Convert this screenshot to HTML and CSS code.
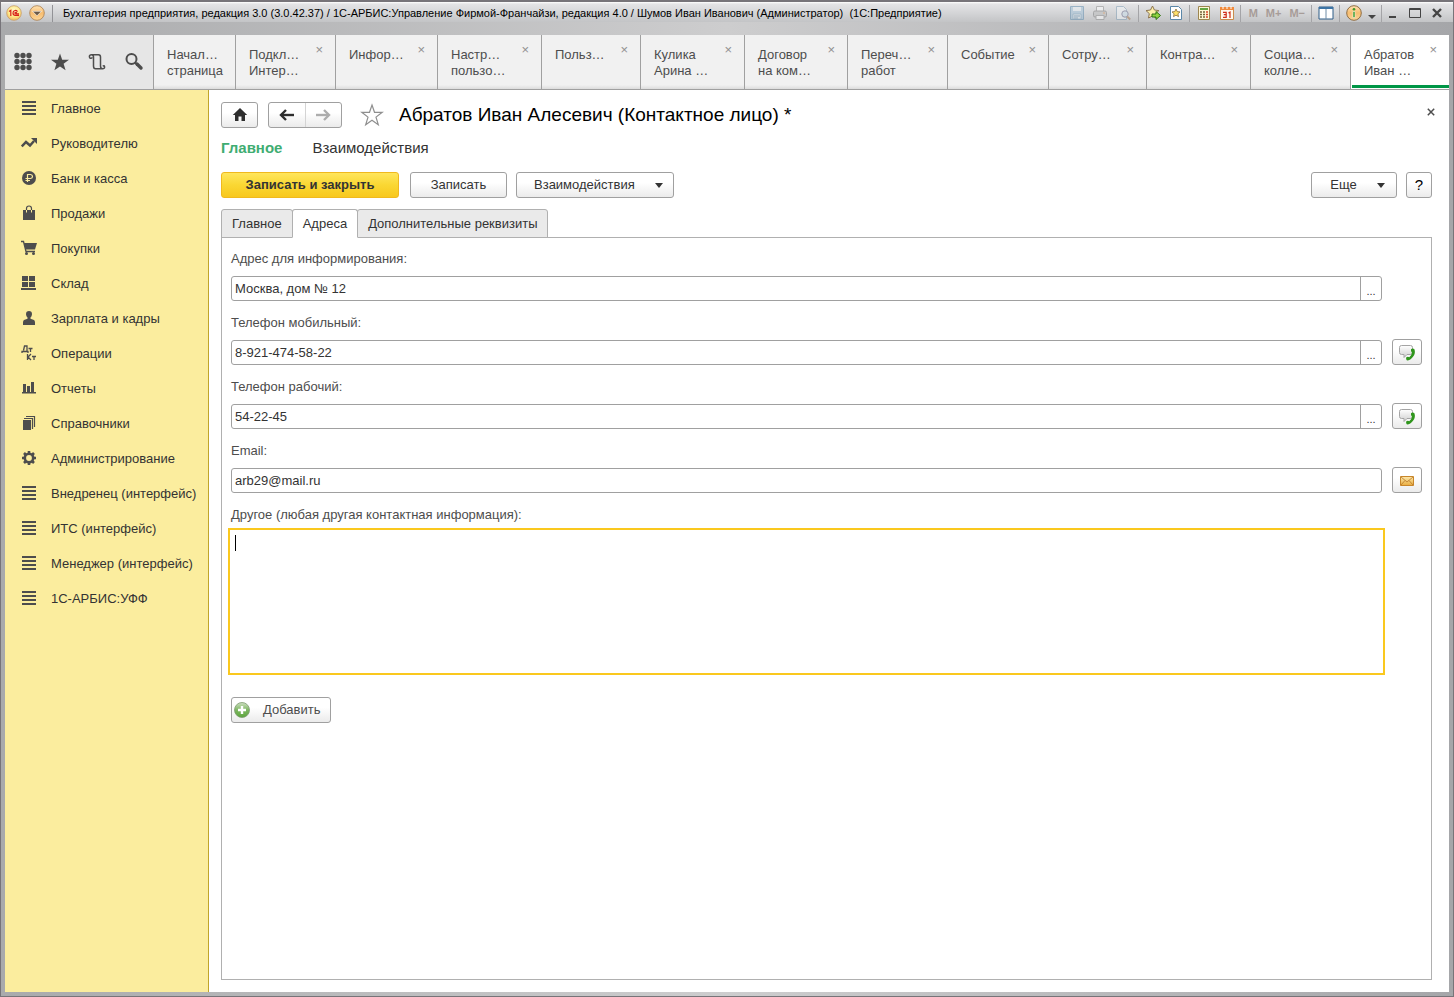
FILE: index.html
```html
<!DOCTYPE html>
<html lang="ru">
<head>
<meta charset="utf-8">
<title>Абратов Иван Алесевич (Контактное лицо)</title>
<link rel="stylesheet" href="styles.css">
</head>
<body>
<svg class="defs" aria-hidden="true">
  <defs>
    <radialGradient id="g-red" cx="50%" cy="35%" r="65%"><stop offset="0" stop-color="#fffbd0"/><stop offset=".6" stop-color="#ffe98a"/><stop offset="1" stop-color="#f2b95e"/></radialGradient>
    <linearGradient id="g-orange" x1="0" y1="0" x2="0" y2="1"><stop offset="0" stop-color="#ffe3b4"/><stop offset=".5" stop-color="#f8bd70"/><stop offset="1" stop-color="#fbd79a"/></linearGradient>
    <linearGradient id="g-green" x1="0" y1="0" x2="0" y2="1"><stop offset="0" stop-color="#cfe0c4"/><stop offset=".5" stop-color="#7db661"/><stop offset="1" stop-color="#5ca63c"/></linearGradient>
    <linearGradient id="g-mail" x1="0" y1="0" x2="0" y2="1"><stop offset="0" stop-color="#fde9ad"/><stop offset="1" stop-color="#e9ac3e"/></linearGradient>
    <linearGradient id="g-bubble" x1="0" y1="0" x2="0" y2="1"><stop offset="0" stop-color="#ffffff"/><stop offset="1" stop-color="#cfcfcf"/></linearGradient>
    <symbol id="lines" viewBox="0 0 16 16"><path fill="#4d4d4d" d="M1 1h14v2H1zM1 5h14v2H1zM1 9h14v2H1zM1 13h14v2H1z"/></symbol>
    <symbol id="phone" viewBox="0 0 18 18"><path d="M3.500 2.500h9q2 0 2 2v5q0 2-2 2H9L6 14.500v-3H3.500q-2 0-2-2v-5q0-2 2-2z" fill="url(#g-bubble)" stroke="#a4a4a4"/><path d="M13 6.300Q14.500 4.800 16.300 6 18 10 15 13.800 12.500 17.300 9 17.500 7.500 16.300 8.300 14.300 9.800 13.200 11.300 14.300 13.600 12.800 14 9.800 12.500 9 13 6.300z" fill="#2f951c"/></symbol>
  </defs>
</svg>
<div class="window">
  <header class="titlebar">
    <svg class="orb" viewBox="0 0 16 16"><circle cx="8" cy="8" r="7.300" fill="url(#g-red)" stroke="#c89d6a" stroke-width=".8"/><path d="M3 6.500 4.800 5.300V11M11.500 6.600Q10.500 5.300 9 5.500 6.900 6 7 8.100 7.200 10.300 9.200 10.300H13M10.800 8.200Q9.800 6.700 8.800 8 9 9 10 8.900H13" fill="none" stroke="#d8201a" stroke-width="1.200"/></svg>
    <svg class="orb" viewBox="0 0 16 16"><circle cx="8" cy="8" r="7.300" fill="url(#g-orange)" stroke="#a97c4c" stroke-width=".8"/><path d="M3.500 6.300h9L8 10.800z" fill="#6b5a48" stroke="#fff" stroke-width=".6"/></svg>
    <span class="sep"></span>
    <span class="caption">Бухгалтерия предприятия, редакция 3.0 (3.0.42.37) / 1С-АРБИС:Управление Фирмой-Франчайзи, редакция 4.0 / Шумов Иван Иванович (Администратор)&nbsp; (1С:Предприятие)</span>
    <div class="systools">
      <div class="group">
        <svg class="faded" viewBox="0 0 16 16"><path d="M1.500 1.500h13v13h-13z" fill="#9fc0d8" stroke="#5888ab"/><path d="M4 2h8v4H4z" fill="#e7eff5"/><path d="M4 9h8v5H4z" fill="#dce8f0" stroke="#5888ab" stroke-width=".6"/><path d="M5 11h6M5 13h4" stroke="#5888ab"/></svg>
        <svg class="faded" viewBox="0 0 16 16"><path d="M4.500 6V1.500h7V6" fill="#fff" stroke="#8c8c8c"/><rect x="1.500" y="6" width="13" height="6" rx="1.500" fill="#bbb" stroke="#777"/><path d="M4 10.500h8v4H4z" fill="#fff" stroke="#8c8c8c"/><path d="M11 8h2" stroke="#e1893a"/></svg>
        <svg class="faded" viewBox="0 0 16 16"><path d="M1.500 1.500h7l3 3v10h-10z" fill="#f3f6f8" stroke="#7c9cb4"/><circle cx="10" cy="9" r="3.200" fill="#cde0ec" stroke="#668"/><path d="m12.200 11.500 3 3" stroke="#a5764c" stroke-width="1.800"/></svg>
      </div>
      <div class="group">
        <svg viewBox="0 0 16 16"><path d="m7.500 1 1.900 4 4.500.6-3.200 3 .8 4.400-4-2-4 2 .8-4.400-3.300-3 4.500-.6z" fill="#fdf0a8" stroke="#8d7550"/><path d="M7 9h4V6.500L15.500 10.500 11 14.500V12H7z" fill="#8fd33f" stroke="#2f7514"/></svg>
        <svg viewBox="0 0 16 16"><path d="M2.500 1.500h8l3 3v10h-11z" fill="#fff" stroke="#5b87a8"/><path d="m8 4 1.200 2.600 2.800.3-2.100 1.900.6 2.800L8 10.200l-2.500 1.400.6-2.800L4 6.900l2.800-.3z" fill="#ffe26b" stroke="#8a6d3b" stroke-width=".8"/></svg>
      </div>
      <div class="group">
        <svg viewBox="0 0 16 16"><path d="M2.500 1.500h11v13h-11z" fill="#fff7d8" stroke="#9d8650"/><path d="M4 3h8v2H4z" fill="#64a844"/><path d="M4 7h2M7 7h2M4 9.500h2M7 9.500h2M4 12h2M7 12h2" stroke="#75633c" stroke-width="1.400"/><path d="M10 7h2M10 9.500h2M10 12h2" stroke="#d8462c" stroke-width="1.400"/></svg>
        <svg viewBox="0 0 16 16"><path d="M1.500 2.500h13v12h-13z" fill="#fff9ee" stroke="#c98c4d"/><path d="M1 2h14v3H1z" fill="#f08a3c"/><path d="M4 1v3M8 1v3M12 1v3" stroke="#fff"/><path d="M4 7.300h3.200v5H4M4.800 9.700h2M9.500 8 11 7v6" fill="none" stroke="#cf2f1c" stroke-width="1.200"/></svg>
      </div>
      <div class="group memory"><span>M</span><span>M+</span><span>M−</span></div>
      <div class="group"><svg viewBox="0 0 16 16"><path d="M1 2h14v12H1z" fill="#fff" stroke="#2c5c88"/><path d="M1 2h14v2H1z" fill="#3d74a5"/><path d="M8 4v10" stroke="#6f8ca6"/></svg></div>
      <div class="group info"><svg viewBox="0 0 16 16"><circle cx="8" cy="8" r="7.300" fill="url(#g-orange)" stroke="#8f6d43"/><path d="M7 6.500h2v6H7z" fill="#3f9a2a" stroke="#fff" stroke-width=".5"/><circle cx="8" cy="4.300" r="1.300" fill="#3f9a2a"/></svg><svg class="drop" viewBox="0 0 8 16"><path d="M0 10h8l-4 4z" fill="#444"/></svg></div>
      <div class="group winbtns">
        <svg viewBox="0 0 12 12"><path d="M2 9h7v2H2z" fill="#444"/></svg>
        <svg viewBox="0 0 12 12"><path d="M.5 1.500h11v9H.5zM.5 2.500h11" fill="none" stroke="#444"/></svg>
        <svg viewBox="0 0 12 12"><path d="m2 2 8 8m0-8-8 8" stroke="#444" stroke-width="2.400"/></svg>
      </div>
    </div>
  </header>

  <nav class="tabbar">
    <div class="tools">
      <svg viewBox="0 0 20 20"><g fill="#4d4d4d"><circle cx="4" cy="3.500" r="2.700"/><circle cx="10" cy="3.500" r="2.700"/><circle cx="16" cy="3.500" r="2.700"/><circle cx="4" cy="9.500" r="2.700"/><circle cx="10" cy="9.500" r="2.700"/><circle cx="16" cy="9.500" r="2.700"/><circle cx="4" cy="15.500" r="2.700"/><circle cx="10" cy="15.500" r="2.700"/><circle cx="16" cy="15.500" r="2.700"/></g></svg>
      <svg viewBox="0 0 20 20"><path d="m10 1.500 2.200 6.300H19l-5.400 4 2 6.500L10 14.400l-5.600 3.900 2-6.500L1 7.800h6.800z" fill="#4d4d4d"/></svg>
      <svg viewBox="0 0 20 20"><path d="M4.500 2.700H11.500Q13.500 2.700 13.500 5V14Q13.500 16.800 15.600 16.800T17.600 14.800Q17.300 13 15.800 14.300M4.500 2.700Q2.400 2.700 2.400 4.600T4.200 6.300Q5 6.200 4.900 5.200M4.500 2.700Q6.500 2.700 6.500 5V14Q6.500 16.800 8.500 16.800H15.500" fill="none" stroke="#4d4d4d" stroke-width="1.500"/></svg>
      <svg viewBox="0 0 20 20"><circle cx="7.500" cy="7" r="5" fill="none" stroke="#4d4d4d" stroke-width="2"/><path d="m11 10.500 2 2" stroke="#4d4d4d" stroke-width="2"/><path d="m13 12 4 4" stroke="#4d4d4d" stroke-width="3.400" stroke-linecap="round"/></svg>
    </div>
    <div class="tabs">
      <a class="tab" href="#">Начал…<br>страница</a>
      <a class="tab" href="#">Подкл…<br>Интер…<i class="x">×</i></a>
      <a class="tab" href="#">Инфор…<i class="x">×</i></a>
      <a class="tab" href="#">Настр…<br>пользо…<i class="x">×</i></a>
      <a class="tab" href="#">Польз…<i class="x">×</i></a>
      <a class="tab" href="#">Кулика<br>Арина …<i class="x">×</i></a>
      <a class="tab" href="#">Договор<br>на ком…<i class="x">×</i></a>
      <a class="tab" href="#">Переч…<br>работ<i class="x">×</i></a>
      <a class="tab" href="#">Событие<i class="x">×</i></a>
      <a class="tab" href="#">Сотру…<i class="x">×</i></a>
      <a class="tab" href="#">Контра…<i class="x">×</i></a>
      <a class="tab" href="#">Социа…<br>колле…<i class="x">×</i></a>
      <a class="tab current" href="#">Абратов<br>Иван …<i class="x">×</i></a>
    </div>
  </nav>

  <div class="body">
    <nav class="sidebar">
      <a href="#"><svg><use href="#lines"/></svg>Главное</a>
      <a href="#"><svg viewBox="0 0 16 16"><path d="M.8 11.500 5 7l4 3.500L13 6" fill="none" stroke="#4d4d4d" stroke-width="2.500"/><path d="M10 3h6v6z" fill="#4d4d4d"/></svg>Руководителю</a>
      <a href="#"><svg viewBox="0 0 16 16"><circle cx="8" cy="8" r="7" fill="#4d4d4d"/><path d="M6.500 12V4.500H9.500Q11.500 4.700 11.500 6.500T9.500 8.500H4.500M4.500 10.500H9" fill="none" stroke="#fbed9e" stroke-width="1.200"/></svg>Банк и касса</a>
      <a href="#"><svg viewBox="0 0 16 16"><path d="M2 5h12v10H2z" fill="#4d4d4d"/><path d="M5.500 7V3.500Q5.500 1 8 1t2.500 2.500V7" fill="none" stroke="#4d4d4d" stroke-width="1.200"/><path d="M5.500 5v2.500M10.500 5v2.500" stroke="#fbed9e"/></svg>Продажи</a>
      <a href="#"><svg viewBox="0 0 16 16"><path d="M0 1.500h2.500L5 11.500h9" fill="none" stroke="#4d4d4d" stroke-width="1.300"/><path d="M3 3h13l-2 6.500H4.500z" fill="#4d4d4d"/><circle cx="5.500" cy="13.500" r="1.500" fill="#4d4d4d"/><circle cx="12.500" cy="13.500" r="1.500" fill="#4d4d4d"/></svg>Покупки</a>
      <a href="#"><svg viewBox="0 0 16 16"><path d="M1 1h6v5H1zM8 1h6v5H8zM1 7h6v5H1zM8 7h6v5H8zM0 13h15v2H0z" fill="#4d4d4d"/></svg>Склад</a>
      <a href="#"><svg viewBox="0 0 16 16"><path d="M8 1q3 0 3 3.200Q10.800 6.500 9.500 7.500v1.300L13 10q1 .5 1 2.500V15H2v-2.500Q2 10.500 3 10l3.500-1.200V7.500Q5.200 6.500 5 4.200 5 1 8 1z" fill="#4d4d4d"/></svg>Зарплата и кадры</a>
      <a href="#"><svg viewBox="0 0 16 16"><path d="M2.500 5.500 3.500 1H6v5M1 8V6.500h6V8M7.500 3.500h4M9.500 3.500V7M6.500 9v6M10 9 7 12l3 3M11 11.500h4M13 11.500V15" fill="none" stroke="#4d4d4d" stroke-width="1.300"/></svg>Операции</a>
      <a href="#"><svg viewBox="0 0 16 16"><path d="M2 4h3v9H2zM6 6h3v7H6zM10 2h3v11h-3zM1 12h14v1.500H1z" fill="#4d4d4d"/></svg>Отчеты</a>
      <a href="#"><svg viewBox="0 0 16 16"><path d="M2 5h8v10H2z" fill="#4d4d4d"/><path d="M3 3.500h8.500V14M5 1.500h8.500V12" fill="none" stroke="#4d4d4d" stroke-width="1.200"/></svg>Справочники</a>
      <a href="#"><svg viewBox="0 0 16 16"><circle cx="8" cy="8" r="4.200" fill="none" stroke="#4d4d4d" stroke-width="2.600"/><path d="M8 1v3M8 12v3M1 8h3M12 8h3M3 3l2 2M11 11l2 2M13 3l-2 2M5 11l-2 2" stroke="#4d4d4d" stroke-width="2.600"/></svg>Администрирование</a>
      <a href="#"><svg><use href="#lines"/></svg>Внедренец (интерфейс)</a>
      <a href="#"><svg><use href="#lines"/></svg>ИТС (интерфейс)</a>
      <a href="#"><svg><use href="#lines"/></svg>Менеджер (интерфейс)</a>
      <a href="#"><svg><use href="#lines"/></svg>1С-АРБИС:УФФ</a>
    </nav>

    <main class="page">
      <div class="heading">
        <button class="btn home" type="button" aria-label="Домой"><svg viewBox="0 0 16 16"><path d="M8 1 .8 8H3v6h3.500V9.500h3V14H13V8h2.200z" fill="#2e2e2e"/></svg></button>
        <div class="history">
          <button type="button" aria-label="Назад"><svg viewBox="0 0 16 16"><path d="M2 8h13" stroke="#2e2e2e" stroke-width="2.400"/><path d="M7 3 2 8l5 5" fill="none" stroke="#2e2e2e" stroke-width="2.400"/></svg></button>
          <button type="button" aria-label="Вперед"><svg viewBox="0 0 16 16"><path d="M1 8h13" stroke="#adadad" stroke-width="2.400"/><path d="m9 3 5 5-5 5" fill="none" stroke="#adadad" stroke-width="2.400"/></svg></button>
        </div>
        <svg class="fav" viewBox="0 0 24 24"><path d="m12 2 2.500 7.300h7.700l-6.200 4.800 2.300 7.600L12 17.200l-6.300 4.500L8 14.100 1.800 9.300h7.700z" fill="#fff" stroke="#8f8f8f" stroke-width="1.200"/></svg>
        <h1>Абратов Иван Алесевич (Контактное лицо) *</h1>
        <button class="close" type="button" aria-label="Закрыть"><svg viewBox="0 0 8 8"><path d="m.8.8 6.400 6.400m0-6.400L.8 7.200" stroke="#4d4d4d" stroke-width="1.500"/></svg></button>
      </div>
      <div class="sections"><a class="active" href="#">Главное</a><a href="#">Взаимодействия</a></div>
      <div class="commands">
        <button class="btn primary" type="button">Записать и закрыть</button>
        <button class="btn save" type="button">Записать</button>
        <button class="btn menu" type="button">Взаимодействия<i class="arrow"></i></button>
        <button class="btn menu more" type="button">Еще<i class="arrow"></i></button>
        <button class="btn help" type="button">?</button>
      </div>
      <div class="formtabs"><button type="button">Главное</button><button class="on" type="button">Адреса</button><button type="button">Дополнительные реквизиты</button></div>
      <form class="panel">
        <div class="field">
          <label for="addr">Адрес для информирования:</label>
          <div class="row"><div class="box"><input id="addr" value="Москва, дом № 12"><button type="button">...</button></div><span class="side"></span></div>
        </div>
        <div class="field">
          <label for="mob">Телефон мобильный:</label>
          <div class="row"><div class="box"><input id="mob" value="8-921-474-58-22"><button type="button">...</button></div><button class="btn side" type="button" aria-label="Позвонить"><svg><use href="#phone"/></svg></button></div>
        </div>
        <div class="field">
          <label for="work">Телефон рабочий:</label>
          <div class="row"><div class="box"><input id="work" value="54-22-45"><button type="button">...</button></div><button class="btn side" type="button" aria-label="Позвонить"><svg><use href="#phone"/></svg></button></div>
        </div>
        <div class="field">
          <label for="mail">Email:</label>
          <div class="row"><div class="box"><input id="mail" value="arb29@mail.ru"></div><button class="btn side" type="button" aria-label="Написать"><svg viewBox="0 0 18 18"><path d="M2.500 5.500h13v9h-13z" fill="url(#g-mail)" stroke="#c8862a"/><path d="m3 6 6 5 6-5M3 14l4-4.500M15 14l-4-4.500" fill="none" stroke="#b9792a" stroke-width=".8"/></svg></button></div>
        </div>
        <div class="field other">
          <label for="other">Другое (любая другая контактная информация):</label>
          <div class="memo"><textarea id="other"></textarea><span class="caret"></span></div>
        </div>
        <button class="btn add" type="button"><svg viewBox="0 0 16 16"><circle cx="8" cy="8" r="7.500" fill="url(#g-green)" stroke="#7d9a70" stroke-width=".8"/><path d="M8 4v8M4 8h8" stroke="#fff" stroke-width="2.400"/></svg>Добавить</button>
      </form>
    </main>
  </div>
</div>
</body>
</html>
```
FILE: styles.css
```css
* { box-sizing: border-box; }
html, body { height: 100%; }
body { margin: 0; font: 13px/16px "Liberation Sans", Arial, sans-serif; color: #333; }
a { color: inherit; text-decoration: none; }
button, input, textarea { font: inherit; color: inherit; margin: 0; }
button { padding: 0; background: none; border: 0; }
svg { display: block; flex: none; }
.defs { position: absolute; width: 0; height: 0; }

.window {
  min-height: 100vh; display: flex; flex-direction: column;
  padding: 0 4px 4px; border: 1px solid #777479; border-top-width: 2px;
  background: linear-gradient(90deg, #a9aaac, #cdcdce 50%, #a5a6a9);
}
.titlebar {
  display: flex; align-items: center; height: 20px; margin: 0 -4px 13px; padding: 2px 10px 0 5px;
  background: linear-gradient(#fff 0, #e4e4e6 2px, #d2d3d5 12px, #c3c4c6);
}
.orb { width: 16px; height: 16px; margin-right: 7px; }
.sep { width: 1px; height: 17px; background: #929296; margin-right: 10px; }
.caption { font-size: 11px; color: #000; white-space: nowrap; }
.systools { display: flex; align-items: center; margin-left: auto; }
.group { display: flex; align-items: center; gap: 7px; padding: 0 5px 0 6px; height: 17px; border-left: 1px solid #a4a4a7; }
.group:first-child { border: 0; padding-right: 7px; }
.group svg { width: 16px; height: 16px; }
.group .faded { opacity: .5; }
.memory { gap: 8px; padding: 0 6px 0 8px; font-weight: bold; font-size: 11px; color: #a79c98; }
.info { gap: 6px; }
.group .drop { width: 8px; }
.winbtns { gap: 10px; padding: 0 0 0 5px; }
.winbtns svg { width: 12px; height: 12px; }

.tabbar { display: flex; height: 55px; background: #e6e6e6; border-bottom: 1px solid #a0a0a0; }
.tools { display: flex; align-items: center; gap: 17px; width: 148px; padding: 0 8px; }
.tools svg { width: 20px; height: 20px; }
.tabs {
  flex: 1; display: grid;
  grid-template-columns: 82fr 100fr 102fr 104fr 99fr 104fr 103fr 100fr 101fr 98fr 104fr 100fr 99fr;
}
.tab {
  position: relative; min-width: 0; overflow: hidden; white-space: nowrap; padding: 12px 0 0 13px; color: #4d4d4d;
  border-left: 1px solid #a0a0a0; background: linear-gradient(#f1f1f1 50px, #dcdcdc);
}
.tab.current { background: linear-gradient(#009646, #009646) 1px 50px / 100% 3px no-repeat #fff; }
.x { position: absolute; right: 12px; top: 7px; font-style: normal; color: #909090; }

.body { flex: 1; display: flex; background: #fff; }
.sidebar { width: 204px; padding-top: 1px; background: #fbed9e; border-right: 1px solid #c0a52a; }
.sidebar a { display: flex; align-items: center; gap: 14px; height: 35px; padding-left: 16px; }
.sidebar svg { width: 16px; height: 16px; margin-bottom: 2px; }

.page { flex: 1; display: flex; flex-direction: column; padding: 12px 17px 12px 12px; min-width: 0; }
.btn {
  display: flex; align-items: center; justify-content: center; height: 26px;
  border: 1px solid #a0a0a0; border-radius: 3px; background: linear-gradient(#fff, #fff 40%, #ebebeb);
}
.heading { display: flex; align-items: center; height: 26px; }
.home { width: 37px; margin-right: 10px; }
.home svg, .history svg { width: 16px; height: 16px; }
.history { display: flex; width: 74px; height: 26px; border: 1px solid #a0a0a0; border-radius: 3px; background: linear-gradient(#fff, #fff 40%, #ebebeb); }
.history button { flex: 1; display: flex; align-items: center; justify-content: center; }
.history button + button { border-left: 1px solid #d4d4d4; }
.fav { width: 24px; height: 24px; margin: 0 15px 0 18px; }
h1 { margin: 0; font-size: 19px; line-height: 26px; font-weight: normal; color: #000; }
.close { margin: 0 -3px 6px auto; }
.close svg { width: 8px; height: 8px; }
.sections { display: flex; gap: 30px; margin-top: 11px; font-size: 15px; line-height: 18px; }
.sections .active { color: #3fad72; font-weight: bold; }
.commands { display: flex; margin-top: 15px; }
.primary { width: 178px; margin-right: 11px; font-weight: bold; border-color: #f0b91e; background: linear-gradient(#ffe65c, #fad733 50%, #f8c81e); }
.save { width: 97px; margin-right: 9px; }
.menu { gap: 20px; padding: 0 10px 0 17px; }
.arrow { border: 4px solid transparent; border-top: 5px solid #333; border-bottom: 0; }
.more { width: 86px; margin-left: auto; margin-right: 9px; }
.help { width: 26px; font-size: 15px; color: #000; }
.formtabs { display: flex; margin-top: 11px; }
.formtabs button { height: 29px; padding: 0 10px; background: #eaeaea; border: 1px solid #b0b0b0; border-radius: 3px 3px 0 0; margin-left: -1px; }
.formtabs button:first-child { margin-left: 0; }
.formtabs .on { background: #fff; border-bottom-color: #fff; position: relative; z-index: 1; }
.panel { flex: 1; margin-top: -1px; padding: 13px 9px; border: 1px solid #b0b0b0; }
.field { margin-bottom: 14px; }
.field label { display: block; margin-bottom: 8px; color: #4d4d4d; }
.row { display: flex; align-items: flex-end; gap: 10px; height: 26px; }
.box { flex: 1; display: flex; height: 25px; border: 1px solid #a0a0a0; border-radius: 3px; background: #fff; }
.box input { flex: 1; min-width: 0; padding: 0 3px; border: 0; background: none; outline: 0; }
.box button { width: 21px; padding-top: 4px; font-size: 11px; border-left: 1px solid #a0a0a0; }
.side { width: 30px; }
.side svg { width: 18px; height: 18px; }
.other { margin: 0 37px 22px -3px; }
.other label { margin: 0 0 5px 3px; }
.memo { position: relative; }
.memo textarea { display: block; width: 100%; height: 147px; padding: 4px 5px; border: 2px solid #fac81e; resize: none; outline: 0; }
.caret { position: absolute; left: 7px; top: 7px; width: 1px; height: 16px; background: #000; }
.add { gap: 13px; padding: 0 10px 0 2px; color: #4d4d4d; }
.add svg { width: 16px; height: 16px; }
```
